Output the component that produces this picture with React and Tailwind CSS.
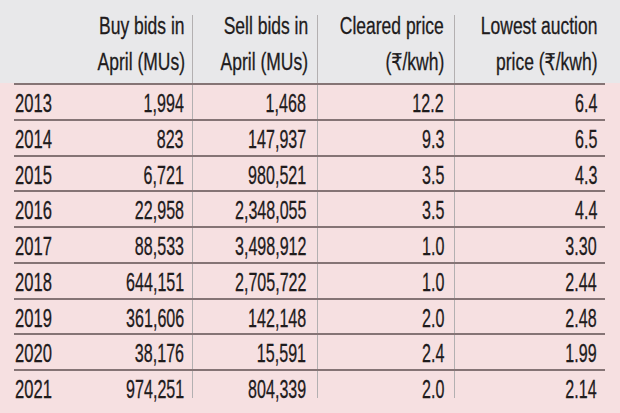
import React from "react";

const rows = [
  ["2013", "1,994", "1,468", "12.2", "6.4"],
  ["2014", "823", "147,937", "9.3", "6.5"],
  ["2015", "6,721", "980,521", "3.5", "4.3"],
  ["2016", "22,958", "2,348,055", "3.5", "4.4"],
  ["2017", "88,533", "3,498,912", "1.0", "3.30"],
  ["2018", "644,151", "2,705,722", "1.0", "2.44"],
  ["2019", "361,606", "142,148", "2.0", "2.48"],
  ["2020", "38,176", "15,591", "2.4", "1.99"],
  ["2021", "974,251", "804,339", "2.0", "2.14"],
];

const font = { fontFamily: "'Liberation Sans', 'DejaVu Sans', sans-serif" };

function H({ children, cls }) {
  return (
    <div className={"flex h-[68px] flex-col items-end " + cls}>
      <div className="-mt-[7px] flex flex-col items-end text-[23px] leading-[36px] text-[#1e1b1c] [-webkit-text-stroke:0.3px_#1e1b1c]">
        {children.map((t, i) => (
          <span key={i} className="inline-block origin-right scale-x-[0.76] whitespace-nowrap">
            {t}
          </span>
        ))}
      </div>
    </div>
  );
}

export default function App() {
  return (
    <div className="flex h-[413px] w-[620px] flex-col overflow-hidden bg-[#f6e0e1]" style={font}>
      <div className="h-[83px] shrink-0 bg-[#e8e8ea]">
        <div className="ml-[14px] mt-[15px] grid w-[591px] grid-cols-[60px_119px_125px_137px_150px]">
          <div />
          <H cls="border-r border-[#b3b0b1] pr-[7px]">{["Buy bids in", "April (MUs)"]}</H>
          <H cls="border-r border-[#b3b0b1] pr-[9px]">{["Sell bids in", "April (MUs)"]}</H>
          <H cls="border-r border-[#b3b0b1] pr-[10px]">{["Cleared price", "(₹/kwh)"]}</H>
          <H cls="pr-[8px]">{["Lowest auction", "price (₹/kwh)"]}</H>
        </div>
      </div>
      <div className="ml-[14px] flex w-[591px] flex-col">
        {rows.map((r, i) => {
          const last = i === rows.length - 1;
          const cellH = last ? "h-[27px]" : "h-[33.75px]";
          const num = "inline-block origin-right scale-x-[0.63] whitespace-nowrap";
          return (
            <div
              key={r[0]}
              className="grid grid-cols-[60px_119px_125px_137px_150px] border-t-2 border-[#857475] text-[25.5px] leading-[34px] text-[#1e1b1c] [-webkit-text-stroke:0.3px_#1e1b1c]"
            >
              <div className={cellH + " pl-[1px] pt-[1px]"}>
                <span className="inline-block origin-left scale-x-[0.65] whitespace-nowrap">{r[0]}</span>
              </div>
              <div className={cellH + " border-r border-[#b3b0b1] pr-[8px] pt-[1px] text-right"}>
                <span className={num}>{r[1]}</span>
              </div>
              <div className={cellH + " border-r border-[#b3b0b1] pr-[11px] pt-[1px] text-right"}>
                <span className={num}>{r[2]}</span>
              </div>
              <div className={cellH + " border-r border-[#b3b0b1] pr-[10px] pt-[1px] text-right"}>
                <span className={num}>{r[3]}</span>
              </div>
              <div className={cellH + " pr-[8px] pt-[1px] text-right"}>
                <span className={num}>{r[4]}</span>
              </div>
            </div>
          );
        })}
      </div>
    </div>
  );
}
